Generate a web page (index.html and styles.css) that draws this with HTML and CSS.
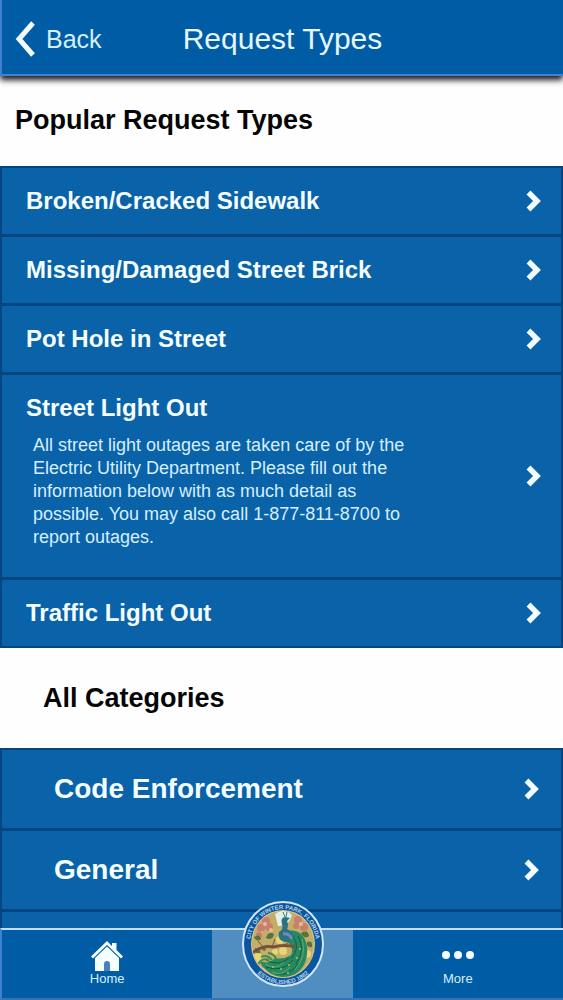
FILE: index.html
```
<!DOCTYPE html>
<html lang="en">

<head>
    <meta charset="UTF-8">
    <meta name="viewport" content="width=device-width, initial-scale=1.0">
    <title>Request Types</title>
    <link rel="stylesheet" href="styles.css">
</head>

<body>
    <svg class="sprite" aria-hidden="true">
        <symbol id="chevron" viewBox="0 0 16 24">
            <path d="M3.500 3.500 L12 12 L3.500 20.500" fill="none" stroke="#f4fdff" stroke-width="5.500"/>
        </symbol>
    </svg>
    <div id="main">
        <header>
            <a class="back" href="#">
                <svg width="22" height="36" viewBox="0 0 22 36" aria-hidden="true">
                    <path d="M19 2 L5 18 L19 34" fill="none" stroke="#f4fdff" stroke-width="5"/>
                </svg>
                <span>Back</span>
            </a>
            <h1>Request Types</h1>
        </header>

        <div class="content">
            <h2>Popular Request Types</h2>
            <ul class="list">
                <li><a href="#"><h3>Broken/Cracked Sidewalk</h3><svg class="arrow"><use href="#chevron"/></svg></a></li>
                <li><a href="#"><h3>Missing/Damaged Street Brick</h3><svg class="arrow"><use href="#chevron"/></svg></a></li>
                <li><a href="#"><h3>Pot Hole in Street</h3><svg class="arrow"><use href="#chevron"/></svg></a></li>
                <li>
                    <a href="#">
                        <div>
                            <h3>Street Light Out</h3>
                            <p>All street light outages are taken care of by the Electric Utility Department. Please fill out the information below with as much detail as possible. You may also call 1-877-811-8700 to report outages.</p>
                        </div>
                        <svg class="arrow"><use href="#chevron"/></svg>
                    </a>
                </li>
                <li><a href="#"><h3>Traffic Light Out</h3><svg class="arrow"><use href="#chevron"/></svg></a></li>
            </ul>

            <h2 class="all">All Categories</h2>
            <ul class="list categories">
                <li><a href="#"><h3>Code Enforcement</h3><svg class="arrow"><use href="#chevron"/></svg></a></li>
                <li><a href="#"><h3>General</h3><svg class="arrow"><use href="#chevron"/></svg></a></li>
                <li class="empty"></li>
            </ul>
        </div>

        <nav>
            <a href="#">
                <svg width="32" height="30" viewBox="0 0 32 30" aria-hidden="true">
                    <path d="M16 0 L21 5 V2 H25.500 V9 L32 15.500 L30 17.500 L16 4 L2 17.500 L0 15.500 Z" fill="#f4fdff"/>
                    <path d="M16 5.500 L28 17 V30 H4 V17 Z" fill="#f4fdff"/>
                    <path d="M13 30 V23 Q13 20 16 20 Q19 20 19 23 V30 Z" fill="#4a80bd"/>
                </svg>
                <span>Home</span>
            </a>
            <a class="center" href="#" aria-label="City seal">
                <svg class="seal" width="84" height="88" viewBox="0 0 84 88" aria-hidden="true">
                    <defs>
                        <path id="arc-top" d="M9 44 A33 35 0 0 1 75 44"/>
                        <path id="arc-bottom" d="M4 44 A38 40 0 0 0 80 44"/>
                        <clipPath id="inner"><ellipse cx="42" cy="44" rx="31" ry="33"/></clipPath>
                    </defs>
                    <ellipse cx="42" cy="44" rx="40" ry="42" fill="#0b55a0" stroke="#d3e6f5" stroke-width="2"/>
                    <ellipse cx="42" cy="44" rx="32" ry="34" fill="#d9c98a"/>
                    <g clip-path="url(#inner)">
                        <rect x="10" y="10" width="64" height="70" fill="#c4ad68"/>
                        <path d="M34 14 Q44 7 51 15 Q48 27 37 26 Z" fill="#e3f0e8"/>
                        <!-- blossoms -->
                        <g fill="#c97f6d">
                            <circle cx="25" cy="21" r="4"/><circle cx="20" cy="28" r="4"/>
                            <circle cx="28" cy="27" r="4"/><circle cx="18" cy="35" r="3"/>
                            <circle cx="57" cy="20" r="4"/><circle cx="63" cy="27" r="4"/>
                            <circle cx="55" cy="26" r="3"/>
                        </g>
                        <g fill="#e8b99b">
                            <circle cx="24" cy="24" r="2"/><circle cx="30" cy="30" r="2"/>
                            <circle cx="60" cy="24" r="2"/><circle cx="21" cy="32" r="1"/>
                        </g>
                        <!-- leaves -->
                        <g fill="#54763c">
                            <path d="M13 37 q6 -4 7 2 q-4 4 -7 -2"/>
                            <path d="M25 38 q2 -7 8 -4 q-1 7 -8 4"/>
                            <path d="M60 33 q7 -4 8 3 q-4 4 -8 -3"/>
                            <path d="M66 42 q6 -2 5 5 q-6 1 -5 -5"/>
                            <path d="M14 48 q7 1 5 6 q-6 0 -5 -6"/>
                            <path d="M22 46 q4 2 2 5 q-5 -1 -2 -5"/>
                        </g>
                        <g fill="#ead477">
                            <circle cx="39" cy="40" r="4"/><circle cx="42" cy="51" r="4"/>
                            <circle cx="17" cy="58" r="5"/><circle cx="26" cy="67" r="4"/>
                            <circle cx="66" cy="54" r="4"/><circle cx="34" cy="52" r="3"/>
                        </g>
                        <!-- peacock tail -->
                        <path d="M46 31 Q62 28 66 46 Q68 66 53 75 Q38 81 25 70 Q20 66 19 61 Q28 65 34 58 Q42 60 50 55 Q54 47 44 40 Z" fill="#26895f"/>
                        <path d="M57 36 Q65 50 55 64 M52 36 Q60 48 50 59 M52 60 Q42 73 25 67 M48 58 Q38 67 25 60 M57 64 Q49 76 35 74" fill="none" stroke="#145c45" stroke-width="1"/>
                        <path d="M61 39 Q66 56 54 70 M43 62 Q35 71 24 64 M49 67 Q41 77 31 72" fill="none" stroke="#61ae6b" stroke-width="1"/>
                        <path d="M28 60 Q20 57 17 65 M31 60 Q26 54 20 57 M35 59 Q34 54 27 53" fill="none" stroke="#3e8f55" stroke-width="2"/>
                        <g fill="#b0bd5b">
                            <circle cx="32" cy="67" r="1"/><circle cx="40" cy="69" r="1"/>
                            <circle cx="48" cy="65" r="1"/><circle cx="56" cy="58" r="1"/>
                            <circle cx="59" cy="49" r="1"/><circle cx="47" cy="73" r="1"/>
                        </g>
                        <!-- branch -->
                        <path d="M11 53 Q22 45 32 47 Q44 44 54 47" fill="none" stroke="#74533a" stroke-width="3"/>
                        <path d="M23 48 L17 41 M31 47 L34 39 M42 46 L48 42" fill="none" stroke="#74533a" stroke-width="1"/>
                        <!-- neck and head -->
                        <path d="M49 18 L44 17 Q39 18 41 24 Q43 29 38 32 Q36 40 44 42 Q51 42 52 36 Q52 32 46 29 Q48 25 46 21 Z" fill="#2b7185"/>
                        <path d="M42 34 Q48 33 51 39" fill="none" stroke="#6b8db2" stroke-width="3"/>
                        <path d="M44 17 L42 12 M45 17 L46 12" stroke="#3b7c74" stroke-width="1"/>
                    </g>
                    <text class="seal-text"><textPath href="#arc-top" startOffset="50%" text-anchor="middle">CITY OF WINTER PARK, FLORIDA</textPath></text>
                    <text class="seal-text"><textPath href="#arc-bottom" startOffset="50%" text-anchor="middle">ESTABLISHED 1882</textPath></text>
                </svg>
            </a>
            <a href="#">
                <svg width="32" height="30" viewBox="0 0 32 30" aria-hidden="true">
                    <g fill="#f4fdff">
                        <circle cx="4" cy="14" r="4"/><circle cx="16" cy="14" r="4"/><circle cx="28" cy="14" r="4"/>
                    </g>
                </svg>
                <span>More</span>
            </a>
        </nav>
    </div>
</body>

</html>
```
FILE: styles.css
```
* {
    margin: 0;
    padding: 0;
    box-sizing: border-box;
    font-family: "Liberation Sans", Arial, sans-serif;
}

a {
    color: #f4fdff;
    text-decoration: none;
}

.sprite {
    position: absolute;
    width: 0;
    height: 0;
}

#main {
    display: flex;
    flex-direction: column;
    height: 100vh;
    background-color: #fefefe;
}

header {
    position: relative; /* keeps the shadow above the list */
    z-index: 1;
    display: grid;
    grid-template-columns: 1fr auto 1fr;
    align-items: center;
    flex: none;
    height: 76px;
    padding: 4px 12px 0 12px;
    background-color: #005da5;
    border-left: 2px solid #3f80d0;
    border-bottom: 2px solid #3f80d0;
    box-shadow: 0 4px 6px rgba(0, 0, 0, 0.9);
}

.back {
    display: flex;
    align-items: center;
    gap: 10px;
    font-size: 25px;
}

header h1 {
    color: #e6f7ff;
    font-size: 30px;
    font-weight: normal;
}

.back span {
    color: #d5efff;
}

.content {
    flex: 1;
    min-height: 0;
    overflow-y: auto;
    scrollbar-width: none;
}

h2 {
    padding: 28px 15px 30px;
    color: #050505;
    font-size: 27px;
    line-height: 32px;
}

h2.all {
    padding: 34px 43px;
}

.list {
    list-style-type: none;
    background-color: #0a62a8;
    border: 2px solid #04467f;
}

.list li {
    border-bottom: 3px solid #04467f;
}

.list li:last-child {
    border-bottom: none;
}

.list a {
    display: flex;
    align-items: center;
    justify-content: space-between;
    padding: 20px 20px 20px 24px;
}

.list h3 {
    font-size: 24px;
    line-height: 26px;
}

.list p {
    max-width: 388px;
    margin-top: 13px;
    padding: 0 0 8px 7px;
    color: #d5efff;
    font-size: 18px;
    line-height: 23px;
}

.arrow {
    flex: none;
    width: 16px;
    height: 24px;
}

.categories a {
    padding: 24px 22px 24px 52px;
}

.categories h3 {
    font-size: 28px;
    line-height: 30px;
}

.categories .empty {
    height: 78px;
}

nav {
    display: grid;
    grid-template-columns: 3fr 2fr 3fr;
    flex: none;
    height: 72px;
    background-color: #005da5;
    border-top: 2px solid #c3def2;
    border-left: 2px solid #3f80d0;
    border-bottom: 2px solid #3573b5;
}

nav a {
    display: flex;
    flex-direction: column;
    align-items: center;
    padding-top: 11px;
    color: #d5efff;
    font-size: 13px;
    line-height: 16px;
}

nav .center {
    position: relative;
    background-color: #508ec2;
}

/* seal sticks out over the list */
.seal {
    position: absolute;
    bottom: 10px;
}

.seal-text {
    fill: #b9d5ea;
    font-size: 6px;
    font-weight: bold;
}
```
